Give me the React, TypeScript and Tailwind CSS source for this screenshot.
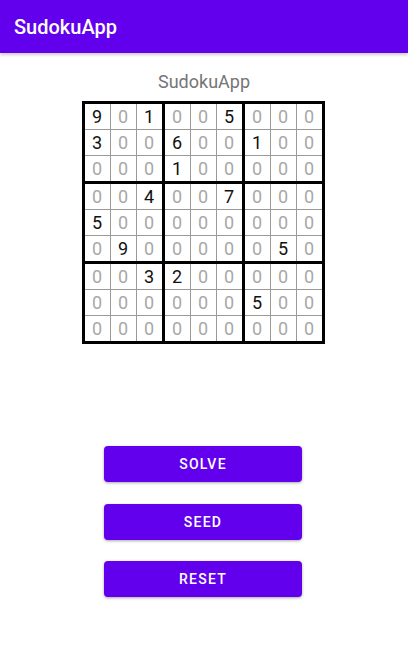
import React from 'react';

const board: number[][] = [
  [9, 0, 1, 0, 0, 5, 0, 0, 0],
  [3, 0, 0, 6, 0, 0, 1, 0, 0],
  [0, 0, 0, 1, 0, 0, 0, 0, 0],
  [0, 0, 4, 0, 0, 7, 0, 0, 0],
  [5, 0, 0, 0, 0, 0, 0, 0, 0],
  [0, 9, 0, 0, 0, 0, 0, 5, 0],
  [0, 0, 3, 2, 0, 0, 0, 0, 0],
  [0, 0, 0, 0, 0, 0, 5, 0, 0],
  [0, 0, 0, 0, 0, 0, 0, 0, 0],
];

const idx = [0, 1, 2];

function Block({ br, bc }: { br: number; bc: number }) {
  return (
    <div className="grid grid-cols-3 gap-px bg-[#9a9a9a]">
      {idx.map((r) =>
        idx.map((c) => {
          const v = board[br * 3 + r][bc * 3 + c];
          return (
            <div
              key={`${r}-${c}`}
              className={`w-[25px] h-[25px] bg-white flex items-center justify-center text-[18px] leading-none ${
                v ? 'text-[#111]' : 'text-[#a8a8a8]'
              }`}
            >
              {v}
            </div>
          );
        })
      )}
    </div>
  );
}

function AppButton({ label, className }: { label: string; className?: string }) {
  return (
    <button
      className={`w-[198px] h-[36px] rounded-[4px] bg-[#6200ee] text-white text-[14px] font-medium tracking-[1.25px] shadow-[0_1px_3px_rgba(0,0,0,0.35)] ${className ?? ''}`}
    >
      {label}
    </button>
  );
}

export default function App() {
  return (
    <div className="w-[408px] h-[652px] bg-white flex flex-col overflow-hidden" style={{ fontFamily: 'Roboto, "Liberation Sans", sans-serif' }}>
      {/* Toolbar */}
      <div className="h-[53px] bg-[#6200ee] flex items-center px-[14px] shadow-[0_2px_3px_rgba(0,0,0,0.2)] shrink-0">
        <span className="text-white text-[20px] font-medium">SudokuApp</span>
      </div>

      <div className="flex flex-col items-center">
        <div className="mt-[17px] text-[18px] leading-[24px] text-[#757575]">SudokuApp</div>

        {/* Board */}
        <div className="mt-[7px] -ml-[2px] grid grid-cols-3 gap-[3px] p-[3px] bg-black">
          {idx.map((br) => idx.map((bc) => <Block key={`${br}-${bc}`} br={br} bc={bc} />))}
        </div>

        <AppButton label="SOLVE" className="mt-[102px] -ml-[2px]" />
        <AppButton label="SEED" className="mt-[22px] -ml-[2px]" />
        <AppButton label="RESET" className="mt-[21px] -ml-[2px]" />
      </div>
    </div>
  );
}
